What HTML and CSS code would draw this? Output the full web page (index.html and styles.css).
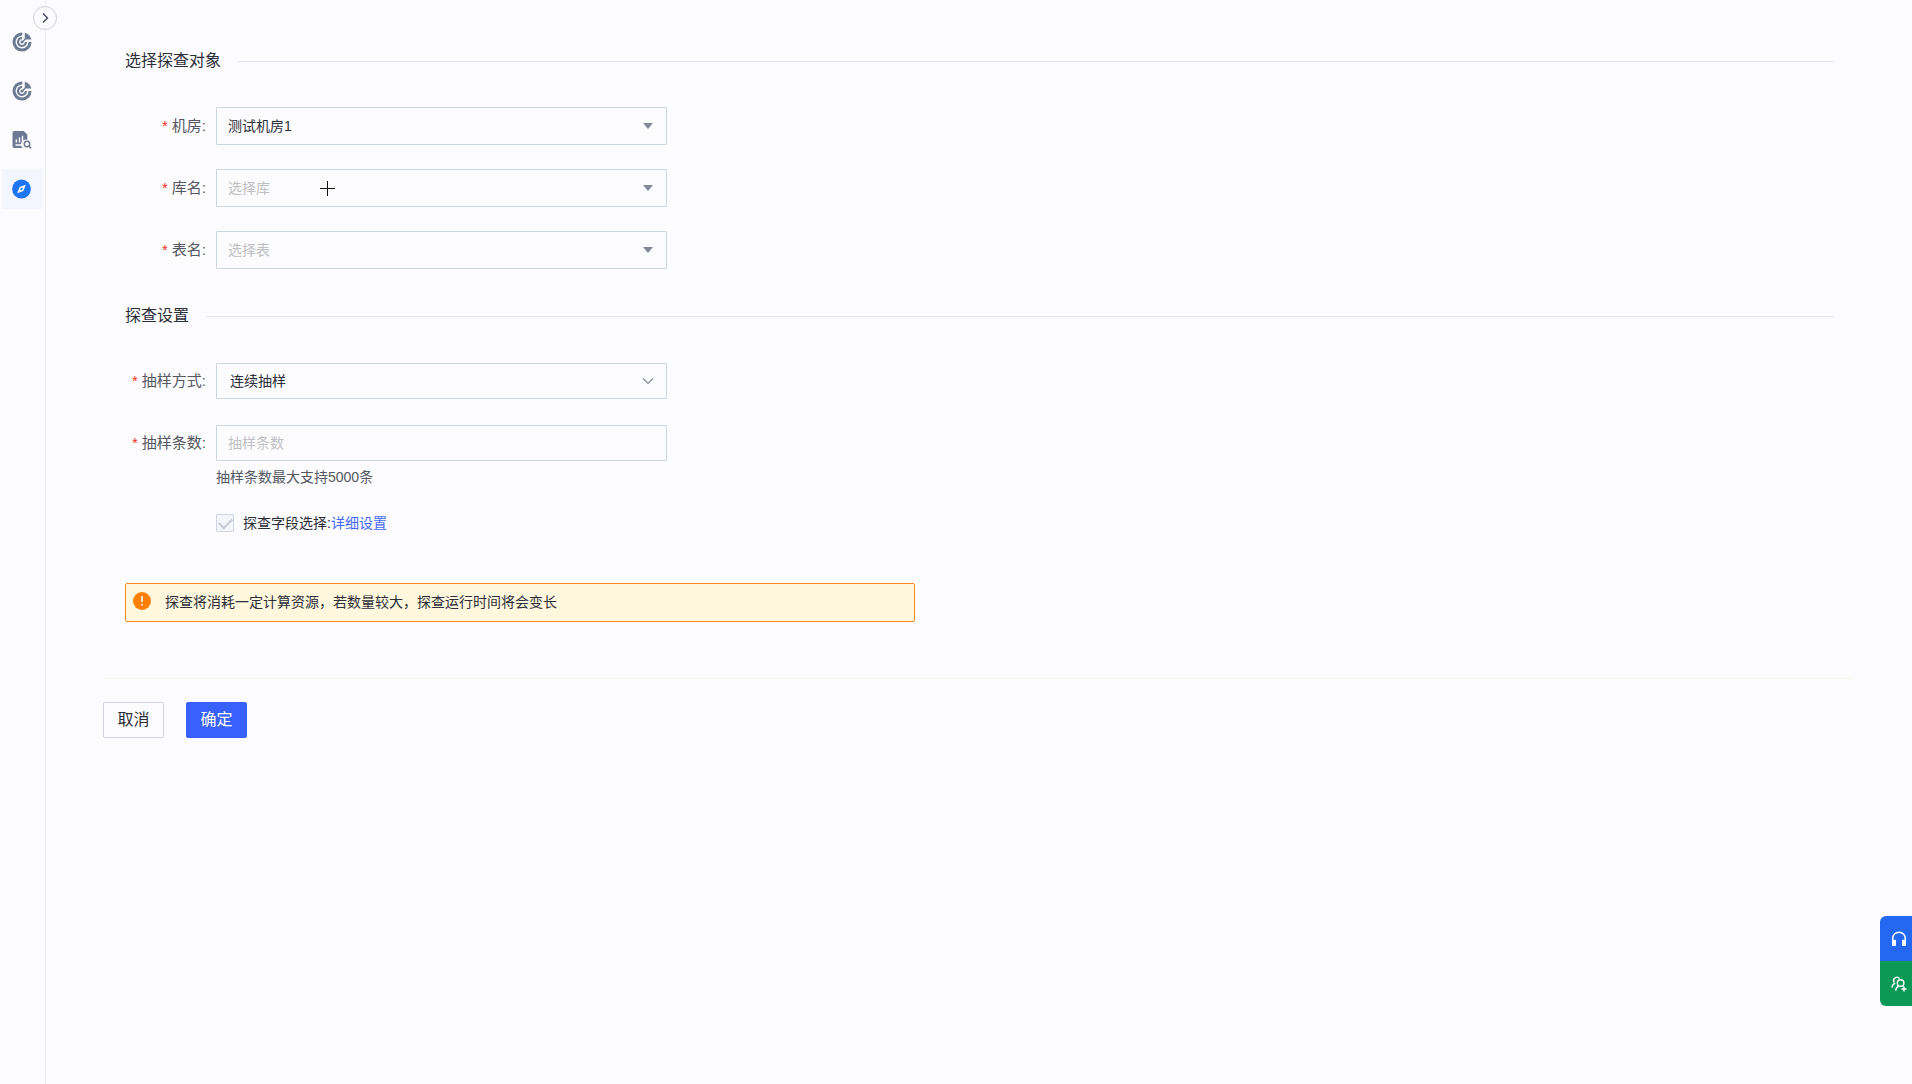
FILE: index.html
```html
<!DOCTYPE html>
<html lang="zh-CN">
<head>
<meta charset="utf-8">
<meta name="viewport" content="width=device-width, initial-scale=1">
<title>数据探查</title>
<link rel="stylesheet" href="styles.css">
</head>
<body>
<svg class="sprite" aria-hidden="true">
  <symbol id="icon-target" viewBox="0 0 20 20">
    <g fill="none" stroke="currentColor">
      <path d="M10.3 2A8 8 0 1 0 18 9.900" stroke-width="3"/>
      <path d="M10.100 6A4 4 0 1 0 14 10" stroke-width="2.200"/>
    </g>
    <circle cx="10" cy="10" r="1.500" fill="currentColor"/>
    <path d="M12.800.7a9.400 9.400 0 0 1 6.600 6.900h-5.600l-2.600 2.700-1.100-1.100 2.700-2.600z" fill="currentColor"/>
  </symbol>
</svg>
<div class="app">
  <aside class="sidebar">
    <button class="toggle" type="button" aria-label="展开">
      <svg viewBox="0 0 12 12" width="12" height="12"><path d="M4 1.500 8.500 6 4 10.500" fill="none" stroke="#44475a" stroke-width="1.400"/></svg>
    </button>
    <nav class="nav" aria-label="主导航">
      <a class="nav-item" href="#" aria-label="监控"><svg width="20" height="20"><use href="#icon-target"/></svg></a>
      <a class="nav-item" href="#" aria-label="目标"><svg width="20" height="20"><use href="#icon-target"/></svg></a>
      <a class="nav-item" href="#" aria-label="报告">
        <svg viewBox="0 0 20 20" width="20" height="20">
          <path d="M2.300 1h9.500L15.300 4.500v5.500a4.600 4.600 0 0 0-4.400 8H2.300A1.800 1.800 0 0 1 .5 16.200V2.800A1.800 1.800 0 0 1 2.300 1z" fill="currentColor"/>
          <path d="M4.300 12.500V9.500M7.500 12.500V7.500M10.500 11.500V5.700M3.500 15h6" stroke="#fcfcfe" stroke-width="1.400" fill="none"/>
          <circle cx="15" cy="14" r="2.700" fill="none" stroke="currentColor" stroke-width="1.500"/>
          <path d="m16.900 16 2 2.200" stroke="currentColor" stroke-width="1.600"/>
        </svg>
      </a>
      <a class="nav-item active" href="#" aria-label="数据探查" aria-current="page">
        <svg viewBox="0 0 20 20" width="20" height="20">
          <circle cx="9.500" cy="10" r="9.400" fill="#1f75f5"/>
          <path d="M13.800 5.700 11.400 11.900 5.200 14.300 7.600 8.100z" fill="#fff"/>
          <path d="M10.300 8.600 10.800 10.200 8.700 11.400 8.200 9.800z" fill="#1f75f5"/>
        </svg>
      </a>
    </nav>
  </aside>

  <main class="main">
    <form class="form">
      <section class="section">
        <h2 class="section-title">选择探查对象</h2>
        <div class="row">
          <label class="label" for="room"><span class="star">*</span>机房:</label>
          <div class="control">
            <select id="room" class="field tall"><option>测试机房1</option></select>
            <svg class="arrow" viewBox="0 0 12 12" width="12" height="12"><path d="M1 3h10L6 9z" fill="#85889a"/></svg>
          </div>
        </div>
        <div class="row">
          <label class="label" for="db"><span class="star">*</span>库名:</label>
          <div class="control">
            <select id="db" class="field tall empty"><option>选择库</option></select>
            <svg class="arrow" viewBox="0 0 12 12" width="12" height="12"><path d="M1 3h10L6 9z" fill="#85889a"/></svg>
            <svg class="cursor" viewBox="0 0 15 15" width="15" height="15"><path d="M7.500 0v15M0 7.500h15" stroke="#111" fill="none"/></svg>
          </div>
        </div>
        <div class="row">
          <label class="label" for="tbl"><span class="star">*</span>表名:</label>
          <div class="control">
            <select id="tbl" class="field tall empty"><option>选择表</option></select>
            <svg class="arrow" viewBox="0 0 12 12" width="12" height="12"><path d="M1 3h10L6 9z" fill="#85889a"/></svg>
          </div>
        </div>
      </section>

      <section class="section">
        <h2 class="section-title">探查设置</h2>
        <div class="row">
          <label class="label" for="mode"><span class="star">*</span>抽样方式:</label>
          <div class="control">
            <select id="mode" class="field indented"><option>连续抽样</option></select>
            <svg class="arrow" viewBox="0 0 12 12" width="12" height="12"><path d="M1 3.500 6 8.500 11 3.500" fill="none" stroke="#85889a" stroke-width="1.200"/></svg>
          </div>
        </div>
        <div class="row">
          <label class="label" for="count"><span class="star">*</span>抽样条数:</label>
          <div class="control"><input id="count" class="field" type="text" placeholder="抽样条数" aria-describedby="count-hint"></div>
        </div>
        <p class="hint" id="count-hint">抽样条数最大支持5000条</p>
        <div class="check-row">
          <input class="check" id="fields" type="checkbox" checked disabled>
          <span><label for="fields">探查字段选择:</label><a class="link" href="#">详细设置</a></span>
        </div>
      </section>

      <div class="notice" role="note">
        <svg viewBox="0 0 18 18" width="18" height="18"><circle cx="9" cy="9" r="9" fill="#ff8000"/><path d="M9 4v6M9 11.800v1.700" stroke="#fff" stroke-width="1.600"/></svg>
        <span>探查将消耗一定计算资源，若数量较大，探查运行时间将会变长</span>
      </div>

      <div class="actions">
        <button class="btn" type="button">取消</button>
        <button class="btn primary" type="submit">确定</button>
      </div>
    </form>
  </main>
</div>

<div class="dock">
  <button class="dock-btn support" type="button" aria-label="客服">
    <svg viewBox="0 0 16 16" width="16" height="16"><path d="M1.700 10V7.500a6.300 6.300 0 0 1 12.600 0V10" fill="none" stroke="#fff" stroke-width="1.500"/><rect x="1" y="8.800" width="4" height="6.200" rx="1" fill="#fff"/><rect x="11" y="8.800" width="4" height="6.200" rx="1" fill="#fff"/></svg>
  </button>
  <button class="dock-btn group" type="button" aria-label="加入群组">
    <svg viewBox="0 0 16 16" width="16" height="16" fill="none" stroke="#fff" stroke-width="1.400"><path d="M3.200 6.300a3.100 3.100 0 1 1 5.300-3.600M4.200 7.200C2.300 8 1.200 9.500 1 11.600"/><circle cx="9.600" cy="7" r="3.300"/><path d="M4.700 14.500c.2-2.300 1.300-3.800 3.300-4.500M11.200 9.700l1.100.8M13 10.500v5M10.500 13h5"/></svg>
  </button>
</div>
</body>
</html>
```

FILE: styles.css
```css
* {
  box-sizing: border-box;
}

body {
  margin: 0;
  background: #fcfcfe;
  color: #2c2e38;
  font: 14px/20px "Liberation Sans", "Noto Sans CJK SC", sans-serif;
}

button,
input,
select {
  font: inherit;
  color: inherit;
}

svg {
  display: block;
  flex: none;
}

.sprite {
  position: absolute;
  width: 0;
  height: 0;
}

.app {
  display: flex;
  min-height: 100vh;
}

/* Sidebar */
.sidebar {
  position: relative;
  flex: none;
  width: 46px;
  padding-top: 22px;
  border-right: 1px solid #eeeefa;
}

.toggle {
  position: absolute;
  top: 6px;
  right: -12px;
  display: grid;
  place-items: center;
  width: 24px;
  height: 24px;
  padding: 0;
  border: 1px solid #cfd0d8;
  border-radius: 50%;
  background: #fcfcfe;
}

.nav {
  display: grid;
  gap: 9px;
  padding-left: 2px;
}

.nav-item {
  display: grid;
  place-items: center;
  width: 40px;
  height: 40px;
  color: #6c7a94;
}

.nav-item.active {
  background: #f3f6fe;
}

/* Form */
.main {
  flex: 1;
  padding: 49px 60px 0 57px;
}

.section {
  padding: 0 17px 11px 22px;
}

.section-title {
  display: flex;
  align-items: center;
  gap: 17px;
  margin: 0 0 34px;
  font-size: 16px;
  font-weight: 400;
  line-height: 24px;
}

.section-title::after {
  content: "";
  flex: 1;
  height: 1px;
  background: #e6e6f8;
}

.row {
  display: grid;
  grid-template-columns: 81px minmax(0, 451px);
  align-items: center;
  gap: 10px;
  min-height: 38px;
  margin-bottom: 24px;
}

.label {
  color: #555762;
  font-size: 15px;
  text-align: right;
  white-space: nowrap;
}

.star {
  margin-right: 4px;
  color: #f5301c;
}

.control {
  position: relative;
}

.field {
  display: block;
  width: 100%;
  height: 36px;
  padding: 0 36px 0 11px;
  border: 1px solid #ced6de;
  border-radius: 1px;
  background: transparent;
  appearance: none;
}

.field.tall {
  height: 38px;
}

.field.indented {
  padding-left: 13px;
}

.field.empty,
.field::placeholder {
  color: #c0c0c4;
  opacity: 1;
}

.arrow {
  position: absolute;
  top: calc(50% - 6px);
  right: 13px;
  pointer-events: none;
}

.cursor {
  position: absolute;
  top: 12px;
  left: 104px;
  pointer-events: none;
}

.hint {
  margin: -19px 0 0 91px;
  color: #555762;
}

.check-row {
  display: flex;
  align-items: center;
  gap: 9px;
  margin: 26px 0 0 91px;
}

.check {
  display: grid;
  place-items: center;
  width: 18px;
  height: 18px;
  margin: 0;
  border: 1px solid #ced4e2;
  border-radius: 1px;
  background: #f5f6fc;
  appearance: none;
}

.check::before {
  content: "";
  width: 11px;
  height: 6px;
  margin-bottom: 3px;
  border: solid #c8cad4;
  border-width: 0 0 2px 2px;
  transform: rotate(-45deg);
}

.link {
  color: #4468f6;
  text-decoration: none;
}

.notice {
  display: flex;
  align-items: flex-start;
  gap: 14px;
  max-width: 790px;
  min-height: 39px;
  margin: 39px 17px 56px 22px;
  padding: 8px 7px;
  border: 1px solid #ff8a1c;
  border-radius: 2px;
  background: #fff8de;
}

.actions {
  display: flex;
  gap: 22px;
  padding-top: 23px;
  border-top: 1px solid #f8f9e6;
}

.btn {
  width: 61px;
  height: 36px;
  padding: 0;
  border: 1px solid #d2d4e0;
  border-radius: 2px;
  background: transparent;
  font-size: 16px;
}

.btn.primary {
  border-color: #3860fb;
  background: #3860fb;
  color: #fff;
}

/* Floating shortcuts */
.dock {
  position: fixed;
  right: 0;
  bottom: 78px;
  overflow: hidden;
  width: 32px;
  border-radius: 6px 0 0 6px;
}

.dock-btn {
  display: grid;
  place-items: center;
  width: 100%;
  height: 45px;
  padding: 0 0 0 5px;
  border: 0;
}

.support {
  background: #2468f2;
}

.group {
  background: #0c9958;
}
```
